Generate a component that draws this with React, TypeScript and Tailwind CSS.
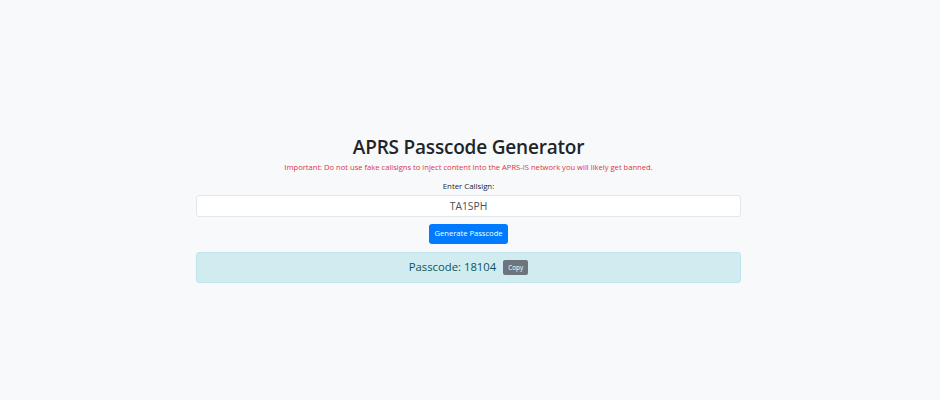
export default function App() {
  return (
    <div className="min-h-[400px] w-full bg-[#f8f9fa] pt-[134px] font-['Open_Sans',sans-serif] text-[#212529]">
      <div className="ml-[196px] flex w-[545px] flex-col items-center">
        <h2 className="text-[19px] leading-[26px] font-semibold tracking-[-0.2px]">APRS Passcode Generator</h2>
        <p className="mt-[1px] text-[7.6px] leading-[12px] text-[#dc3545]">
          Important: Do not use fake callsigns to inject content into the APRS-IS network you will likely get banned.
        </p>
        <label htmlFor="cs" className="mt-[7px] text-[7.8px] leading-[12px]">
          Enter Callsign:
        </label>
        <input
          id="cs"
          readOnly
          value="TA1SPH"
          className="mt-[3px] h-[22px] w-full rounded-[3px] border border-[#e3e6ea] bg-white text-center text-[10.3px] text-[#495057] outline-none"
        />
        <button
          type="button"
          className="mt-[7px] h-[20px] w-[79px] rounded-[3px] bg-[#007bff] text-[7.6px] text-white"
        >
          Generate Passcode
        </button>
        <div className="mt-[8px] flex h-[31px] w-full items-center justify-center gap-[7px] rounded-[3px] border border-[#bee5eb] bg-[#d1ecf1] text-[#0c5460]">
          <span className="text-[11.3px]">Passcode: 18104</span>
          <button
            type="button"
            className="h-[15px] w-[25px] rounded-[2px] bg-[#6c757d] text-[6.3px] leading-[15px] text-white"
          >
            Copy
          </button>
        </div>
      </div>
    </div>
  );
}
